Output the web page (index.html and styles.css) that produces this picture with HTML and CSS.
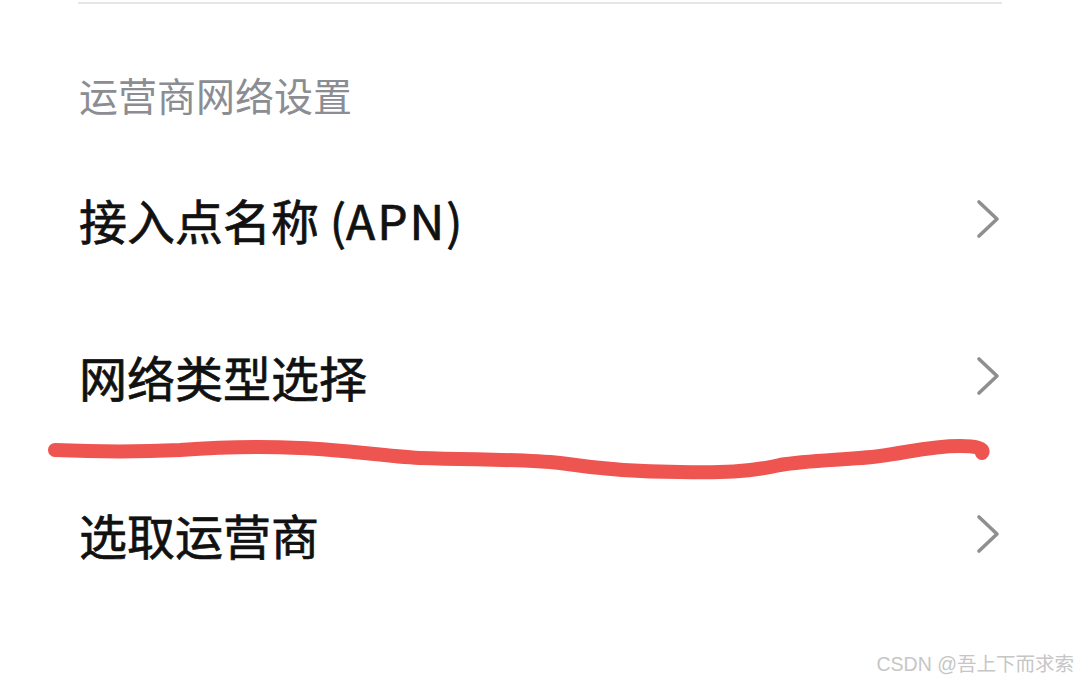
FILE: index.html
```html
<!DOCTYPE html>
<html lang="zh-CN">
<head>
<meta charset="utf-8">
<title>运营商网络设置</title>
<link rel="stylesheet" href="styles.css">
</head>
<body>
<div class="page">
  <div class="divider"></div>
  <div class="section-title">运营商网络设置</div>
  <ul class="list">
    <li class="row"><span class="label">接入点名称 (<span class="latin">APN</span>)</span>
      <svg class="chev" viewBox="0 0 24 40" width="24" height="40"><path d="M3 3 L21 20 L3 37" fill="none" stroke="#8f8f8f" stroke-width="3.6" stroke-linecap="round" stroke-linejoin="round"/></svg>
    </li>
    <li class="row"><span class="label">网络类型选择</span>
      <svg class="chev" viewBox="0 0 24 40" width="24" height="40"><path d="M3 3 L21 20 L3 37" fill="none" stroke="#8f8f8f" stroke-width="3.6" stroke-linecap="round" stroke-linejoin="round"/></svg>
    </li>
    <li class="row"><span class="label">选取运营商</span>
      <svg class="chev" viewBox="0 0 24 40" width="24" height="40"><path d="M3 3 L21 20 L3 37" fill="none" stroke="#8f8f8f" stroke-width="3.6" stroke-linecap="round" stroke-linejoin="round"/></svg>
    </li>
  </ul>
</div>
<svg class="annotation" viewBox="0 0 1080 683" width="1080" height="683">
  <path d="M55 450 C100 452 140 452 180 450 C220 447 260 446 300 448 C350 450 380 456 420 458 C480 460 520 459 560 463 C600 469 640 472 680 472 C720 473 750 472 780 465 C810 460 850 460 880 456 C910 452 930 446 960 446 C975 446 985 448 982 453" fill="none" stroke="#ee5450" stroke-width="14" stroke-linecap="round" stroke-linejoin="round"/>
</svg>
<div class="watermark">CSDN @吾上下而求索</div>
</body>
</html>
```
FILE: styles.css
```css
html, body {
  margin: 0;
  padding: 0;
  background: #ffffff;
}
body {
  width: 1080px;
  height: 683px;
  overflow: hidden;
  position: relative;
  font-family: "Noto Sans CJK SC", "Noto Sans", sans-serif;
}
.page {
  padding: 2px 78px 0 78px;
}
.divider {
  height: 2px;
  background: #e6e6e8;
}
.section-title {
  padding: 67px 0 0 1px;
  height: 69px;
  line-height: 46px;
  font-size: 39px;
  color: #8b8d93;
  box-sizing: content-box;
}
.list {
  list-style: none;
  margin: 0;
  padding: 0;
}
.row {
  height: 157.5px;
  display: flex;
  align-items: center;
  justify-content: space-between;
  padding: 0 0 0 1px;
}
.label {
  font-size: 48px;
  font-weight: 400;
  color: #111111;
  -webkit-text-stroke: 0.7px #111111;
  line-height: 60px;
}
.latin {
  letter-spacing: 2px;
}
.chev {
  margin-right: 2px;
  display: block;
}
.annotation {
  position: absolute;
  left: 0;
  top: 0;
  pointer-events: none;
}
.watermark {
  position: absolute;
  right: 6px;
  bottom: 8px;
  font-family: "Liberation Sans", "Noto Sans CJK SC", sans-serif;
  font-size: 19.5px;
  color: #c6c6c6;
  line-height: 22px;
}
```
